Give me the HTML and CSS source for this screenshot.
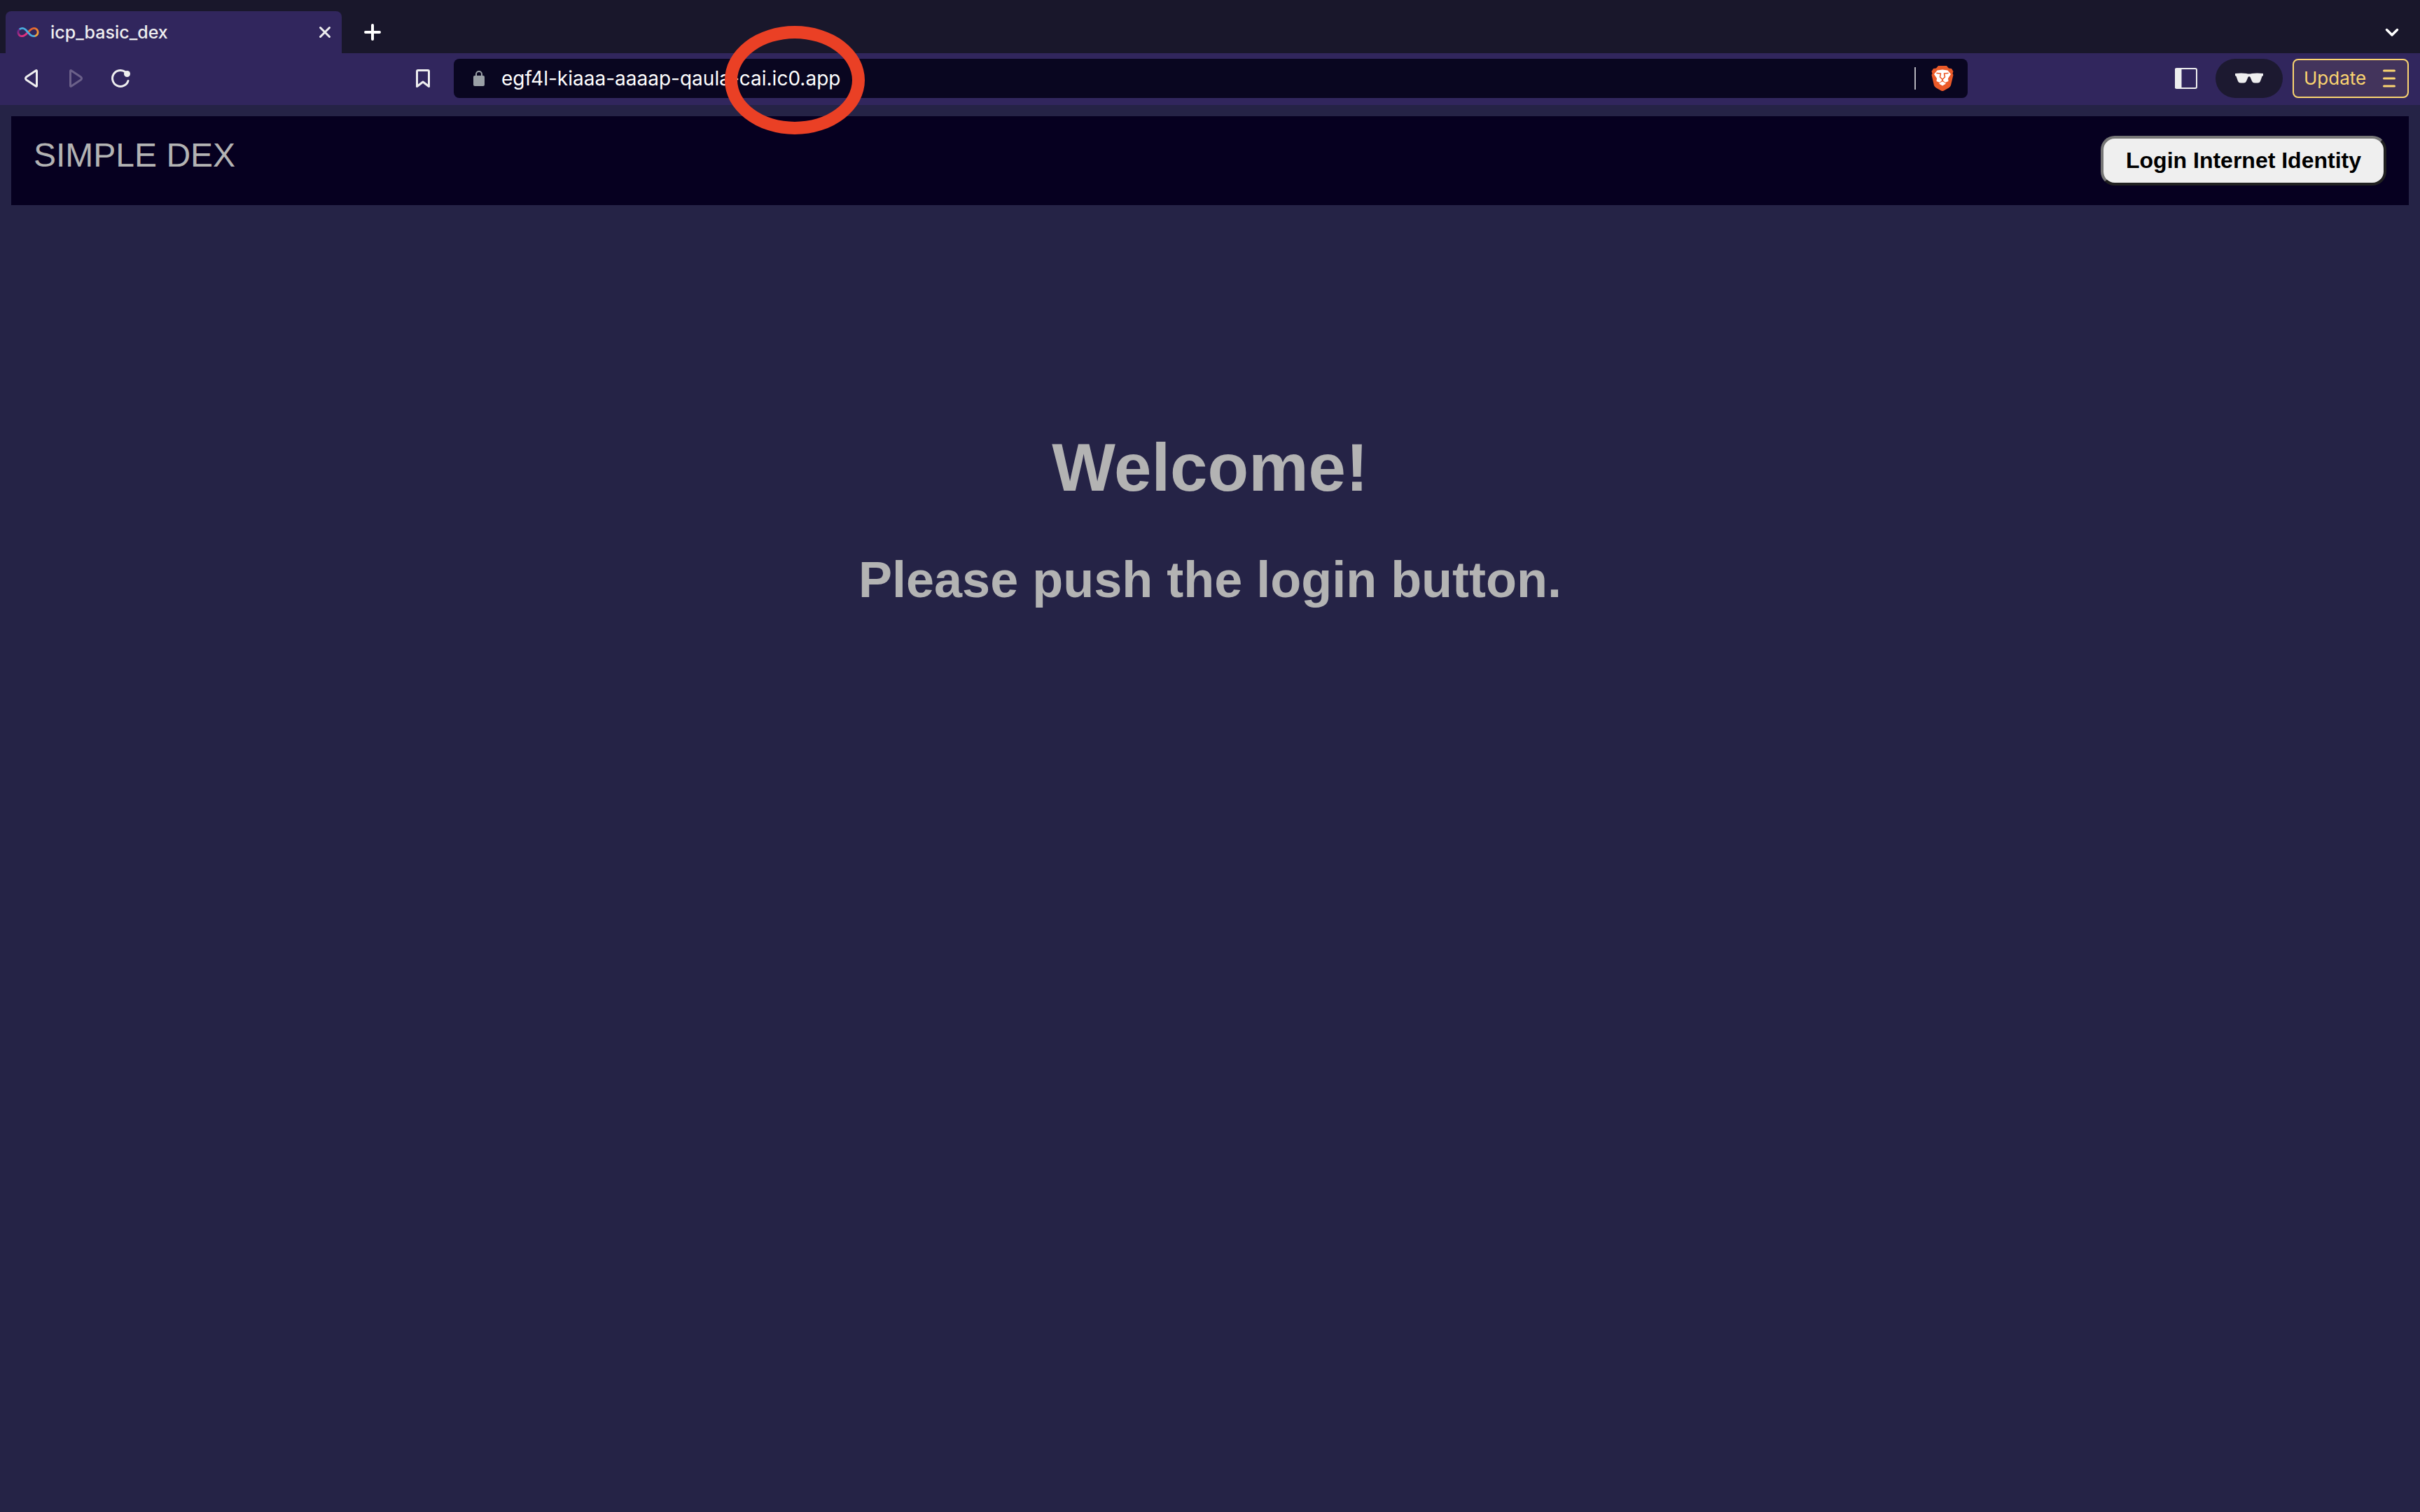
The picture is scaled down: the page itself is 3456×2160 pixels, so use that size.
FILE: index.html
```html
<!DOCTYPE html>
<html lang="en">
<head>
<meta charset="utf-8">
<title>icp_basic_dex</title>
<link rel="stylesheet" href="styles.css">
</head>
<body>
<div class="tabstrip">
  <div class="tab">
    <svg class="favicon" viewBox="-1 0 34 16" aria-hidden="true">
      <defs>
        <linearGradient id="warm" x1="0" x2="1" y1="0" y2="1"><stop offset="0.2" stop-color="#e8602c"/><stop offset="1" stop-color="#f4b13c"/></linearGradient>
        <linearGradient id="pink" x1="0" x2="1" y1="0" y2="1"><stop offset="0" stop-color="#5a2288"/><stop offset="0.7" stop-color="#e0317f"/></linearGradient>
      </defs>
      <path d="M16 8C20 3.500 22 2 25 2A6 6 0 0 1 25 14" stroke="url(#warm)"/>
      <path d="M16 8C12 12.500 10 14 7 14A6 6 0 0 1 3 3.500" stroke="url(#pink)"/>
      <path d="M3 3.700C6 1.500 9 1.500 11.500 3.500C15 6.500 17 10 20 12.300C22 13.800 24 14.300 26.500 13.700" stroke="#4aaee0"/>
    </svg>
    <span class="tab-title">icp_basic_dex</span>
    <button class="icon-btn" aria-label="Close tab"><svg class="icon" viewBox="0 0 32 32"><path d="M9.500 9.500L22.500 22.500M22.500 9.500L9.500 22.500" stroke-width="3"/></svg></button>
  </div>
  <button class="icon-btn new-tab" aria-label="New tab"><svg class="icon" viewBox="0 0 32 32"><path d="M16 6V26M6 16H26" stroke-width="4"/></svg></button>
  <button class="icon-btn tab-search" aria-label="Search tabs"><svg class="icon" viewBox="0 0 32 32"><path d="M8.500 12.500L16 20L23.500 12.500" stroke-width="3.500"/></svg></button>
</div>
<div class="toolbar">
  <div class="history">
    <button class="icon-btn" aria-label="Back"><svg class="icon" viewBox="0 0 32 32"><path d="M24.500 5.500V26.500Q24.500 28 23 27L9.500 18Q7.500 16 9.500 14L23 5Q24.500 4 24.500 5.500Z"/></svg></button>
    <button class="icon-btn" aria-label="Forward" disabled><svg class="icon" viewBox="0 0 32 32"><path d="M8.500 5.500V26.500Q8.500 28 10 27L23.500 18Q25.500 16 23.500 14L10 5Q8.500 4 8.500 5.500Z"/></svg></button>
    <button class="icon-btn" aria-label="Reload"><svg class="icon" viewBox="0 0 32 32"><path d="M23 6.800A11.500 11.500 0 1 0 27 19.500"/><circle class="solid" cx="25.500" cy="9.500" r="4.500" stroke="none"/></svg></button>
  </div>
  <button class="icon-btn bookmark" aria-label="Bookmark"><svg class="icon" viewBox="0 0 32 32"><path d="M7.500 6Q7.500 4.500 9 4.500H23Q24.500 4.500 24.500 6V27.500L16 21L7.500 27.500Z"/></svg></button>
  <div class="address">
    <svg class="lock" viewBox="0 0 16 22" aria-hidden="true"><path class="lock-body" d="M2 7H14Q16 7 16 9V20Q16 22 14 22H2Q0 22 0 20V9Q0 7 2 7Z"/><path d="M4 8V5A4 4 0 0 1 12 5V8" fill="none" stroke="#9aa0a6" stroke-width="2"/></svg>
    <input class="url" type="text" aria-label="Address" value="egf4l-kiaaa-aaaap-qaula-cai.ic0.app">
    <span class="divider"></span>
    <button class="icon-btn" aria-label="Shields">
      <svg class="icon lion" viewBox="0 0 32 36">
        <path fill="#eb5a29" d="M10 0H22L25 3.500L29 4L31.500 8L30.500 11L31.500 13L28 28Q27 30 25 31.500L18 35.500Q16 36.500 14 35.500L7 31.500Q5 30 4 28L.5 13L1.500 11L.5 8L3 4L7 3.500Z"/>
        <path fill="#fff" d="M8.500 6.500L16 5.500L23.500 6.500L28 12L24 18L24.500 22L20 24L16.500 20.500H15.500L12 24L7.500 22L8 18L4 12Z"/>
        <path fill="#fff" d="M16 22L21 25.500L16 28.500L11 25.500Z"/>
        <path fill="none" stroke="#eb5a29" stroke-width="1.600" d="M8 10.500L13.500 11L12.500 16L16 19.500L19.500 16L18.500 11L24 10.500M16 19V22"/>
      </svg>
    </button>
    <span class="highlight-ring"></span>
  </div>
  <div class="actions">
    <button class="icon-btn" aria-label="Sidebar"><svg class="icon" viewBox="0 0 32 32"><rect x="1" y="2" width="30" height="28" rx="2" stroke-width="2"/><path class="solid" d="M1 2H9V30H1Z" stroke-width="1"/></svg></button>
    <button class="private" aria-label="Private profile"><svg class="glasses" viewBox="0 0 40 16"><path d="M0 1Q9 0 16 1Q20 2 24 1Q31 0 40 1V4L38.500 5L36 12Q35 14.500 32 14.500H28Q25 14.500 24 12L21.500 6Q20 4.500 18.500 6L16 12Q15 14.500 12 14.500H8Q5 14.500 4 12L1.500 5L0 4Z"/></svg></button>
    <button class="update">Update<svg class="menu" viewBox="0 0 18 26" aria-hidden="true"><path d="M1.500 2H16.500M1.500 13H16.500M1.500 24H16.500"/></svg></button>
  </div>
</div>
<div class="page">
  <header class="site-header">
    <span class="brand">SIMPLE DEX</span>
    <button class="login">Login Internet Identity</button>
  </header>
  <main class="welcome">
    <h1>Welcome!</h1>
    <h2>Please push the login button.</h2>
  </main>
</div>
</body>
</html>
```
FILE: styles.css
```css
* { box-sizing: border-box; }
body {
  margin: 0;
  min-height: 100vh;
  background: #252346;
  font-family: "Liberation Sans", Arial, sans-serif;
}
button { padding: 0; border: 0; background: none; }
svg { display: block; }

.icon-btn { width: 32px; height: 32px; flex: none; color: #eeeeef; }
.icon-btn:disabled { color: #6b6089; }
.icon {
  width: 32px;
  height: 32px;
  fill: none;
  stroke: currentColor;
  stroke-width: 3;
  stroke-linecap: round;
  stroke-linejoin: round;
}
.icon .solid { fill: currentColor; }

.tabstrip {
  display: flex;
  align-items: center;
  height: 76px;
  padding: 16px 24px 0 8px;
  background: #19172b;
}
.tab {
  display: flex;
  align-items: center;
  width: 480px;
  height: 60px;
  padding: 0 8px 0 16px;
  border-radius: 8px 8px 0 0;
  background: #31265d;
}
.favicon { width: 32px; height: 16px; fill: none; stroke-width: 3; }
.tab-title {
  flex: 1;
  padding-left: 16px;
  color: #eeeeef;
  font: 500 25px/32px Inter, sans-serif;
}
.new-tab { margin-left: 28px; color: #fff; }
.tab-search { margin-left: auto; color: #fff; }

.toolbar {
  display: flex;
  align-items: center;
  height: 74px;
  padding: 8px 16px 10px 28px;
  background: #31265d;
}
.history { display: flex; gap: 32px; }
.bookmark { margin: 0 28px 0 400px; }
.address {
  position: relative;
  display: flex;
  align-items: center;
  flex: 1;
  height: 56px;
  padding: 0 20px 0 28px;
  border-radius: 8px;
  background: #090620;
}
.lock { width: 16px; height: 22px; }
.lock-body { fill: #9aa0a6; }
.url {
  flex: 1;
  min-width: 0;
  padding: 0 0 0 24px;
  border: 0;
  outline: 0;
  background: none;
  color: #fff;
  font: 400 28px/40px Inter, sans-serif;
}
.divider { width: 2px; height: 32px; margin-right: 22px; background: #b5b4bc; }
.icon.lion { height: 36px; margin-top: -2px; stroke: none; }
.highlight-ring {
  position: absolute;
  left: 387px;
  top: -47px;
  width: 200px;
  height: 155px;
  border: 18px solid #ea4025;
  border-radius: 50%;
}
.actions { display: flex; align-items: center; margin-left: 296px; }
.private {
  display: flex;
  align-items: center;
  justify-content: center;
  width: 96px;
  height: 56px;
  margin: 0 14px 0 26px;
  border-radius: 28px;
  background: #1c1930;
}
.glasses { width: 40px; height: 16px; fill: #eeeeef; }
.update {
  display: flex;
  align-items: center;
  justify-content: space-between;
  width: 166px;
  height: 56px;
  padding: 0 17px 0 14px;
  border: 2px solid #fbd570;
  border-radius: 8px;
  background: #43345c;
  color: #fbd570;
  font: 400 26px/40px Inter, sans-serif;
}
.menu { width: 18px; height: 26px; fill: none; stroke: currentColor; stroke-width: 3; stroke-linecap: round; }

.page { padding: 16px; color: #b3b3b3; }
.site-header {
  display: flex;
  align-items: flex-start;
  justify-content: space-between;
  padding: 28px 32px;
  background: #060020;
}
.brand { font-size: 48px; line-height: 56px; }
.login {
  padding: 13px 32px;
  border: 4px solid;
  border-color: #767676 #212121 #212121 #767676;
  border-radius: 20px;
  background: #efefef;
  color: #000;
  font: 700 32px/37px "Liberation Sans", Arial, sans-serif;
}
.welcome { padding-top: 320px; text-align: center; }
h1, h2 { margin: 0; }
h1 { font-size: 96px; line-height: 110px; }
h2 { padding-top: 64px; font-size: 72px; line-height: 82px; }
```
